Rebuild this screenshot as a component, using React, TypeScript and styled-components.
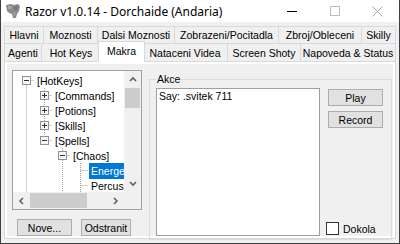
import React from "react";
import styled, { createGlobalStyle } from "styled-components";

const GlobalStyle = createGlobalStyle`
  html, body {
    margin: 0;
    padding: 0;
    background: #ffffff;
  }
  #root {
    width: 400px;
    height: 244px;
  }
  * {
    box-sizing: border-box;
  }
`;

const UI_FONT = `"Liberation Sans", Arial, sans-serif`;

const Window = styled.div`
  width: 400px;
  height: 244px;
  background: #f0f0f0;
  border: 1px solid #3f3f3f;
  border-top: none;
  display: flex;
  flex-direction: column;
  font-family: ${UI_FONT};
  font-size: 10.5px;
  color: #000;
  overflow: hidden;
`;

const TitleBar = styled.div`
  height: 22px;
  flex: none;
  background: #ffffff;
  display: flex;
  align-items: center;
  padding-left: 4px;
`;

const TitleText = styled.span`
  font-family: "Noto Sans", "Open Sans", sans-serif;
  font-size: 12px;
  margin-left: 4px;
  flex: 1;
  white-space: nowrap;
`;

const CaptionButton = styled.div`
  width: 43px;
  height: 22px;
  display: flex;
  align-items: center;
  justify-content: center;
`;

const TabStrip = styled.div`
  padding: 4px 3px 0 3px;
  display: flex;
  flex-direction: column;
  flex: none;
`;

const TabRow = styled.div<{ $h: number }>`
  display: flex;
  height: ${(p) => p.$h}px;
  align-items: flex-start;
`;

const Tab = styled.div<{ $w: number; $h: number; $selected?: boolean }>`
  width: ${(p) => p.$w + (p.$selected ? 4 : 0)}px;
  height: ${(p) => p.$h + (p.$selected ? 3 : 0)}px;
  margin-top: ${(p) => (p.$selected ? -2 : 0)}px;
  margin-left: ${(p) => (p.$selected ? -3 : -1)}px;
  margin-right: ${(p) => (p.$selected ? -2 : 0)}px;
  border: 1px solid #d9d9d9;
  border-bottom: none;
  background: ${(p) => (p.$selected ? "#ffffff" : "#f0f0f0")};
  display: flex;
  align-items: center;
  justify-content: center;
  white-space: nowrap;
  position: relative;
  z-index: ${(p) => (p.$selected ? 2 : 1)};
  padding-bottom: ${(p) => (p.$selected ? 2 : 0)}px;

  &:first-child {
    margin-left: 0;
  }
`;

const Panel = styled.div`
  margin: 0 3px;
  height: 178px;
  border: 1px solid #d9d9d9;
  background: #ffffff;
  padding: 2px;
  position: relative;
  z-index: 1;
`;

const Page = styled.div`
  height: 100%;
  background: #f0f0f0;
  display: flex;
  align-items: flex-start;
  padding: 6px 0 0 5px;
  gap: 7px;
`;

const LeftColumn = styled.div`
  display: flex;
  flex-direction: column;
`;

const TreeBox = styled.div`
  width: 130px;
  height: 140px;
  border: 1px solid #a0a0a0;
  background: #ffffff;
  display: grid;
  grid-template-columns: 111px 17px;
  grid-template-rows: 121px 17px;
`;

const TreeViewport = styled.div`
  position: relative;
  overflow: hidden;
  padding-top: 2px;
`;

const TreeLines = styled.svg`
  position: absolute;
  left: 0;
  top: 0;
`;

const TreeRow = styled.div<{ $level: number }>`
  height: 15px;
  display: flex;
  align-items: center;
  padding-left: ${(p) => 9 + p.$level * 18}px;
  position: relative;
  white-space: nowrap;
`;

const ExpanderSlot = styled.span`
  width: 9px;
  height: 9px;
  flex: none;
  display: flex;
`;

const NodeLabel = styled.span<{ $selected?: boolean }>`
  margin-left: 4px;
  padding: 0 2px;
  height: 16px;
  line-height: 16px;
  background: ${(p) => (p.$selected ? "#0078d7" : "transparent")};
  color: ${(p) => (p.$selected ? "#ffffff" : "#000000")};
`;

const ScrollTrack = styled.div<{ $vertical?: boolean }>`
  background: #f0f0f0;
  display: flex;
  flex-direction: ${(p) => (p.$vertical ? "column" : "row")};
`;

const ScrollArrow = styled.div`
  width: 17px;
  height: 17px;
  flex: none;
  display: flex;
  align-items: center;
  justify-content: center;
`;

const ScrollThumb = styled.div<{ $vertical?: boolean; $size: number }>`
  background: #cdcdcd;
  flex: none;
  ${(p) =>
    p.$vertical
      ? `width: 15px; height: ${p.$size}px; margin-left: 1px;`
      : `height: 15px; width: ${p.$size}px; margin-top: 1px;`}
`;

const ScrollSpacer = styled.div`
  flex: 1;
`;

const ScrollCorner = styled.div`
  background: #f0f0f0;
`;

const ButtonRow = styled.div`
  display: flex;
  gap: 9px;
  margin-top: 9px;
  padding-left: 5px;
`;

const Button = styled.button<{ $w: number }>`
  width: ${(p) => p.$w}px;
  height: 17px;
  padding: 0;
  background: #e1e1e1;
  border: 1px solid #adadad;
  border-radius: 0;
  font-family: ${UI_FONT};
  font-size: 10.5px;
  color: #000;
  display: flex;
  align-items: center;
  justify-content: center;
`;

const GroupBox = styled.fieldset`
  margin: 3px 0 0 0;
  width: 243px;
  height: 167px;
  border: 1px solid #dcdcdc;
  padding: 2px 8px 3px 6px;
  display: flex;
  gap: 8px;
  min-width: 0;
`;

const GroupLegend = styled.legend`
  padding: 0 1px;
  line-height: 13px;
  font-size: 10.5px;
`;

const ListBox = styled.div`
  width: 164px;
  height: 148px;
  border: 1px solid #a0a0a0;
  background: #ffffff;
  padding: 1px 2px;
  line-height: 13px;
`;

const ActionColumn = styled.div`
  width: 55px;
  display: flex;
  flex-direction: column;
  gap: 5px;
  padding-top: 1px;
`;

const CheckRow = styled.label`
  margin-top: auto;
  margin-left: -2px;
  margin-bottom: 1px;
  display: flex;
  align-items: center;
  gap: 4px;
  white-space: nowrap;
`;

const CheckBox = styled.span`
  width: 13px;
  height: 13px;
  border: 1px solid #333333;
  background: #ffffff;
  flex: none;
`;

const RazorIcon = () => (
  <svg width="16" height="16" viewBox="0 0 16 16">
    <path
      d="M1 2 L6 1 L9 2 L13 1 L15 3 L14 8 L12 11 L11 15 L8 15 L7 11 L4 10 L2 8 Z"
      fill="#8a8a8a"
    />
    <path d="M3 3 L7 3 L6 6 L3 6 Z" fill="#a9a9a9" />
    <path d="M9 4 L12 3 L13 6 L10 7 Z" fill="#727272" />
    <path d="M8 9 L11 9 L10 13 L9 13 Z" fill="#9c9c9c" />
  </svg>
);

const Expander = ({ open }: { open: boolean }) => (
  <svg width="9" height="9" viewBox="0 0 9 9">
    <rect x="0.5" y="0.5" width="8" height="8" fill="#f7f7f7" stroke="#919191" />
    <line x1="2" y1="4.5" x2="7" y2="4.5" stroke="#333" />
    {!open && <line x1="4.5" y1="2" x2="4.5" y2="7" stroke="#333" />}
  </svg>
);

const Chevron = ({ dir }: { dir: "up" | "down" | "left" | "right" }) => {
  const pts = {
    up: "1,5 4,2 7,5",
    down: "1,2 4,5 7,2",
    left: "5,1 2,4 5,7",
    right: "2,1 5,4 2,7",
  }[dir];
  return (
    <svg width="8" height="8" viewBox="0 0 8 8">
      <polyline points={pts} fill="none" stroke="#606060" strokeWidth="1.6" />
    </svg>
  );
};

type Node = { label: string; level: number; open?: boolean; leaf?: boolean; selected?: boolean };

const nodes: Node[] = [
  { label: "[HotKeys]", level: 0, open: true },
  { label: "[Commands]", level: 1 },
  { label: "[Potions]", level: 1 },
  { label: "[Skills]", level: 1 },
  { label: "[Spells]", level: 1, open: true },
  { label: "[Chaos]", level: 2, open: true },
  { label: "Energetic Bolt", level: 3, leaf: true, selected: true },
  { label: "Percussion", level: 3, leaf: true },
];

const rowCenter = (i: number) => 9.5 + 15 * i;
const lineX = (level: number) => 13.5 + 18 * level;

const TreeConnectors = () => (
  <TreeLines width="111" height="121">
    <g stroke="#a0a0a0" strokeDasharray="1 1" fill="none">
      <line x1={lineX(0)} y1={rowCenter(0)} x2={lineX(0)} y2={121} />
      <line x1={lineX(1)} y1={17} x2={lineX(1)} y2={rowCenter(4)} />
      <line x1={lineX(2)} y1={77} x2={lineX(2)} y2={121} />
      <line x1={lineX(3)} y1={92} x2={lineX(3)} y2={121} />
      {nodes.map((n, i) => (
        <line
          key={i}
          x1={lineX(n.level)}
          y1={rowCenter(i)}
          x2={21 + 18 * n.level}
          y2={rowCenter(i)}
        />
      ))}
    </g>
  </TreeLines>
);

const row1 = [
  { t: "Hlavni", w: 40 },
  { t: "Moznosti", w: 55 },
  { t: "Dalsi Moznosti", w: 78 },
  { t: "Zobrazeni/Pocitadla", w: 105 },
  { t: "Zbroj/Obleceni", w: 84 },
  { t: "Skilly", w: 35 },
];

const row2 = [
  { t: "Agenti", w: 38 },
  { t: "Hot Keys", w: 60 },
  { t: "Makra", w: 43, selected: true },
  { t: "Nataceni Videa", w: 86 },
  { t: "Screen Shoty", w: 74 },
  { t: "Napoveda & Status", w: 96 },
];

export default function App() {
  return (
    <>
      <GlobalStyle />
      <Window>
        <TitleBar>
          <RazorIcon />
          <TitleText>Razor v1.0.14 - Dorchaide (Andaria)</TitleText>
          <CaptionButton>
            <svg width="10" height="10" viewBox="0 0 10 10">
              <line x1="0" y1="5.5" x2="10" y2="5.5" stroke="#000" />
            </svg>
          </CaptionButton>
          <CaptionButton>
            <svg width="10" height="10" viewBox="0 0 10 10">
              <rect x="0.5" y="0.5" width="9" height="9" fill="none" stroke="#bdbdbd" />
            </svg>
          </CaptionButton>
          <CaptionButton>
            <svg width="11" height="11" viewBox="0 0 11 11">
              <path d="M0.5 0.5 L10.5 10.5 M10.5 0.5 L0.5 10.5" stroke="#a6a6a6" />
            </svg>
          </CaptionButton>
        </TitleBar>

        <TabStrip>
          <TabRow $h={17}>
            {row1.map((tab) => (
              <Tab key={tab.t} $w={tab.w} $h={17}>
                {tab.t}
              </Tab>
            ))}
          </TabRow>
          <TabRow $h={18}>
            {row2.map((tab) => (
              <Tab key={tab.t} $w={tab.w} $h={18} $selected={tab.selected}>
                {tab.t}
              </Tab>
            ))}
          </TabRow>
        </TabStrip>

        <Panel>
          <Page>
            <LeftColumn>
              <TreeBox>
                <TreeViewport>
                  <TreeConnectors />
                  {nodes.map((n) => (
                    <TreeRow key={n.label} $level={n.level}>
                      <ExpanderSlot>{!n.leaf && <Expander open={!!n.open} />}</ExpanderSlot>
                      <NodeLabel $selected={n.selected}>{n.label}</NodeLabel>
                    </TreeRow>
                  ))}
                </TreeViewport>
                <ScrollTrack $vertical>
                  <ScrollArrow>
                    <Chevron dir="up" />
                  </ScrollArrow>
                  <ScrollThumb $vertical $size={20} />
                  <ScrollSpacer />
                  <ScrollArrow>
                    <Chevron dir="down" />
                  </ScrollArrow>
                </ScrollTrack>
                <ScrollTrack>
                  <ScrollArrow>
                    <Chevron dir="left" />
                  </ScrollArrow>
                  <ScrollThumb $size={57} />
                  <ScrollSpacer />
                  <ScrollArrow>
                    <Chevron dir="right" />
                  </ScrollArrow>
                </ScrollTrack>
                <ScrollCorner />
              </TreeBox>
              <ButtonRow>
                <Button $w={55}>Nove...</Button>
                <Button $w={50}>Odstranit</Button>
              </ButtonRow>
            </LeftColumn>

            <GroupBox>
              <GroupLegend>Akce</GroupLegend>
              <ListBox>Say: .svitek 711</ListBox>
              <ActionColumn>
                <Button $w={55}>Play</Button>
                <Button $w={55}>Record</Button>
                <CheckRow>
                  <CheckBox />
                  Dokola
                </CheckRow>
              </ActionColumn>
            </GroupBox>
          </Page>
        </Panel>
      </Window>
    </>
  );
}
